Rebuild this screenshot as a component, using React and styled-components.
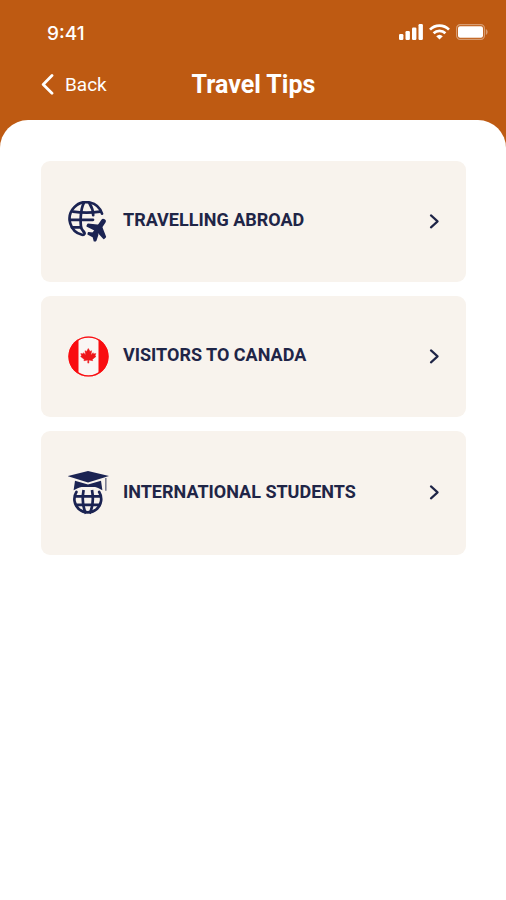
import React from 'react';
import styled, { createGlobalStyle } from 'styled-components';

const GlobalStyle = createGlobalStyle`
    * {
        box-sizing: border-box;
    }
    body {
        margin: 0;
        background: #ffffff;
        font-family: Roboto, "Liberation Sans", sans-serif;
    }
`

const Screen = styled.div`
    min-height: 100vh;
    display: flex;
    flex-direction: column;
    background: #be5a12;
`

const StatusBar = styled.div`
    display: flex;
    justify-content: space-between;
    align-items: center;
    padding: 21px 18px 0 47px;
    color: #ffffff;
`

const Time = styled.span`
    font-family: Inter, Roboto, sans-serif;
    font-size: 19px;
    font-weight: 500;
    line-height: 26px;
`

const StatusIcons = styled.div`
    display: flex;
    align-items: center;
    gap: 6px;
    padding-bottom: 4px;
`

const NavBar = styled.header`
    display: grid;
    grid-template-columns: 1fr auto 1fr;
    align-items: center;
    padding: 23px 40px 20px 41px;
    color: #ffffff;
`

const BackButton = styled.button`
    display: flex;
    align-items: center;
    justify-self: start;
    gap: 9px;
    padding: 0;
    border: 0;
    background: none;
    color: inherit;
    font: inherit;
    font-size: 19px;
    line-height: 30px;
    cursor: pointer;
`

const Title = styled.h1`
    margin: 0;
    font-size: 25px;
    font-weight: 700;
    line-height: 30px;
`

const Sheet = styled.main`
    flex: 1;
    padding: 41px 40px 41px 41px;
    border-radius: 28px 28px 0 0;
    background: #ffffff;
`

const List = styled.nav`
    display: flex;
    flex-direction: column;
    gap: 14px;
`

const Card = styled.a`
    display: flex;
    align-items: center;
    gap: 14px;
    padding: 40px 26px 40px 27px;
    border-radius: 9px;
    background: #f8f3ed;
    color: #1f2547;
    text-decoration: none;
`

const Label = styled.span`
    flex: 1;
    padding-bottom: 3px;
    font-size: 18px;
    font-weight: 700;
    line-height: 22px;
`

const Icon = styled.svg`
    display: block;
    flex: none;
`

const Signal = () => (
    <Icon width="24" height="16" viewBox="0 0 24 16" fill="currentColor" aria-hidden="true">
        <rect x="0" y="10" width="4.4" height="6" rx="1.2" />
        <rect x="6.5" y="7" width="4.4" height="9" rx="1.2" />
        <rect x="13" y="3.5" width="4.4" height="12.5" rx="1.2" />
        <rect x="19.5" y="0" width="4.4" height="16" rx="1.2" />
    </Icon>
)

const Wifi = () => (
    <Icon width="21" height="16" viewBox="0 0 21 16" fill="none" stroke="currentColor" strokeWidth="2.7" aria-hidden="true">
        <path d="M1 5.6a13.4 13.4 0 0 1 19 0" />
        <path d="M4.6 9.2a8.4 8.4 0 0 1 11.8 0" />
        <path d="M10.5 15.6 7.2 12.2a4.8 4.8 0 0 1 6.6 0z" fill="currentColor" stroke="none" />
    </Icon>
)

const Battery = () => (
    <Icon width="32" height="16" viewBox="0 0 32 16" aria-hidden="true">
        <rect x="0.6" y="0.6" width="27.8" height="14.8" rx="3.6" fill="none" stroke="#ffffff" strokeOpacity="0.4" strokeWidth="1.2" />
        <rect x="2" y="2.2" width="25" height="11.6" rx="2" fill="#ffffff" />
        <path d="M29.8 5v6c2.4-1 2.4-5 0-6z" fill="#ffffff" fillOpacity="0.4" />
    </Icon>
)

const BackArrow = () => (
    <Icon width="15" height="22" viewBox="0 0 15 22" fill="none" stroke="currentColor" strokeWidth="2.8" strokeLinecap="round" strokeLinejoin="round" aria-hidden="true">
        <path d="M11 1.6 2.2 10.4l8.8 8.8" />
    </Icon>
)

const Chevron = () => (
    <Icon width="11" height="16" viewBox="0 0 11 16" fill="none" stroke="currentColor" strokeWidth="2.1" strokeLinecap="round" strokeLinejoin="round" aria-hidden="true">
        <path d="M2 1.4l6.6 6L2 13.400" />
    </Icon>
)

const GlobePlane = () => (
    <Icon width="41" height="41" viewBox="0 0 41 41" fill="none" stroke="#1b2352" strokeWidth="2.7" strokeLinecap="round" aria-hidden="true">
        <path d="M34 12.6A16.6 16.6 0 1 0 14 33.8c2.6.6 3.200-1.600 1.800-3.200" />
        <path d="M5 10.6c9 1.4 18 1.400 27 0M2 18.800h23M4 26.400h9" />
        <path d="M15.800 2.200C12.400 8.500 12 22 13.400 27.500l2.200 3.300" />
        <path d="M21.400 2.200c2.600 4 3.800 8 3.800 12" />
        <g fill="#1b2352" strokeLinejoin="round">
            <path d="M35.300 20.400 26 34" strokeWidth="5" />
            <path d="M31.500 24.500 20 23.300l-.8 1.800 9 4.400zM33.500 26l3.800 9.800-1.600 1.500-6.200-6.800z" strokeWidth="1.600" />
            <path d="M27.500 32.500l-7-.6-.3 1.200 5.200 2.700 1 4 1.300-.2 2-6z" strokeWidth="1.600" />
        </g>
    </Icon>
)

const CanadaFlag = () => (
    <Icon width="41" height="41" viewBox="0 0 41 41" aria-hidden="true">
        <clipPath id="flag-circle">
            <circle cx="20.5" cy="20.5" r="20" />
        </clipPath>
        <g clipPath="url(#flag-circle)">
            <rect width="41" height="41" fill="#f90d10" />
            <rect x="10.5" width="20" height="41" fill="#faf6f4" />
        </g>
        <circle cx="20.5" cy="20.5" r="19.4" fill="none" stroke="#f90d10" strokeWidth="1.4" />
        <path
            d="M20.3 12.5l-1.7 3-1.6-.8.7 4.2-2.2-2.2-.5 1.2-2.2-.4.8 2.3-1 .6 3.7 3-.4 1.3 3.9-.6v3h1v-3l3.9.6-.4-1.3 3.7-3-1-.6.8-2.3-2.2.4-.5-1.2-2.2 2.2.7-4.2-1.6.8z"
            fill="#ee1418"
            stroke="#ee1418"
            strokeWidth="0.5"
        />
    </Icon>
)

const GraduateGlobe = () => (
    <Icon width="41" height="44" viewBox="0 0 41 44" fill="none" stroke="#1b2352" strokeWidth="2.7" aria-hidden="true">
        <path d="M20 0 41 5 20 11.400-.5 5.200z" fill="#1b2352" stroke="none" />
        <path d="M7 9.800 20 13.400l13-3.600 1.400 9.400c-2.600-1.200-5-3-7.400-3.200H13.500c-2.500.2-5 2-7.900 3.200z" fill="#1b2352" stroke="none" />
        <path d="M37.800 7v12.800" stroke="#7d7f92" strokeWidth="1.6" />
        <path d="M8.400 21a13.400 13.400 0 1 0 22.800 0" strokeLinecap="round" />
        <path d="M7 25.400h25.600M7 33.800h25.600" />
        <path d="M15.600 19c-1.400 8-1 17 2.400 23.500M24 19c1.400 8 1 17-2.400 23.500" />
    </Icon>
)

const tips = [
    { label: 'TRAVELLING ABROAD', href: '#travelling-abroad', Picture: GlobePlane },
    { label: 'VISITORS TO CANADA', href: '#visitors-to-canada', Picture: CanadaFlag },
    { label: 'INTERNATIONAL STUDENTS', href: '#international-students', Picture: GraduateGlobe },
]

const App = () => {
  return (
    <>
        <GlobalStyle />
        <Screen>
            <StatusBar>
                <Time>9:41</Time>
                <StatusIcons>
                    <Signal />
                    <Wifi />
                    <Battery />
                </StatusIcons>
            </StatusBar>
            <NavBar>
                <BackButton type="button">
                    <BackArrow />
                    Back
                </BackButton>
                <Title>Travel Tips</Title>
            </NavBar>
            <Sheet>
                <List>
                    {tips.map(({ label, href, Picture }) => (
                        <Card key={href} href={href}>
                            <Picture />
                            <Label>{label}</Label>
                            <Chevron />
                        </Card>
                    ))}
                </List>
            </Sheet>
        </Screen>
    </>
  )
}

export default App
